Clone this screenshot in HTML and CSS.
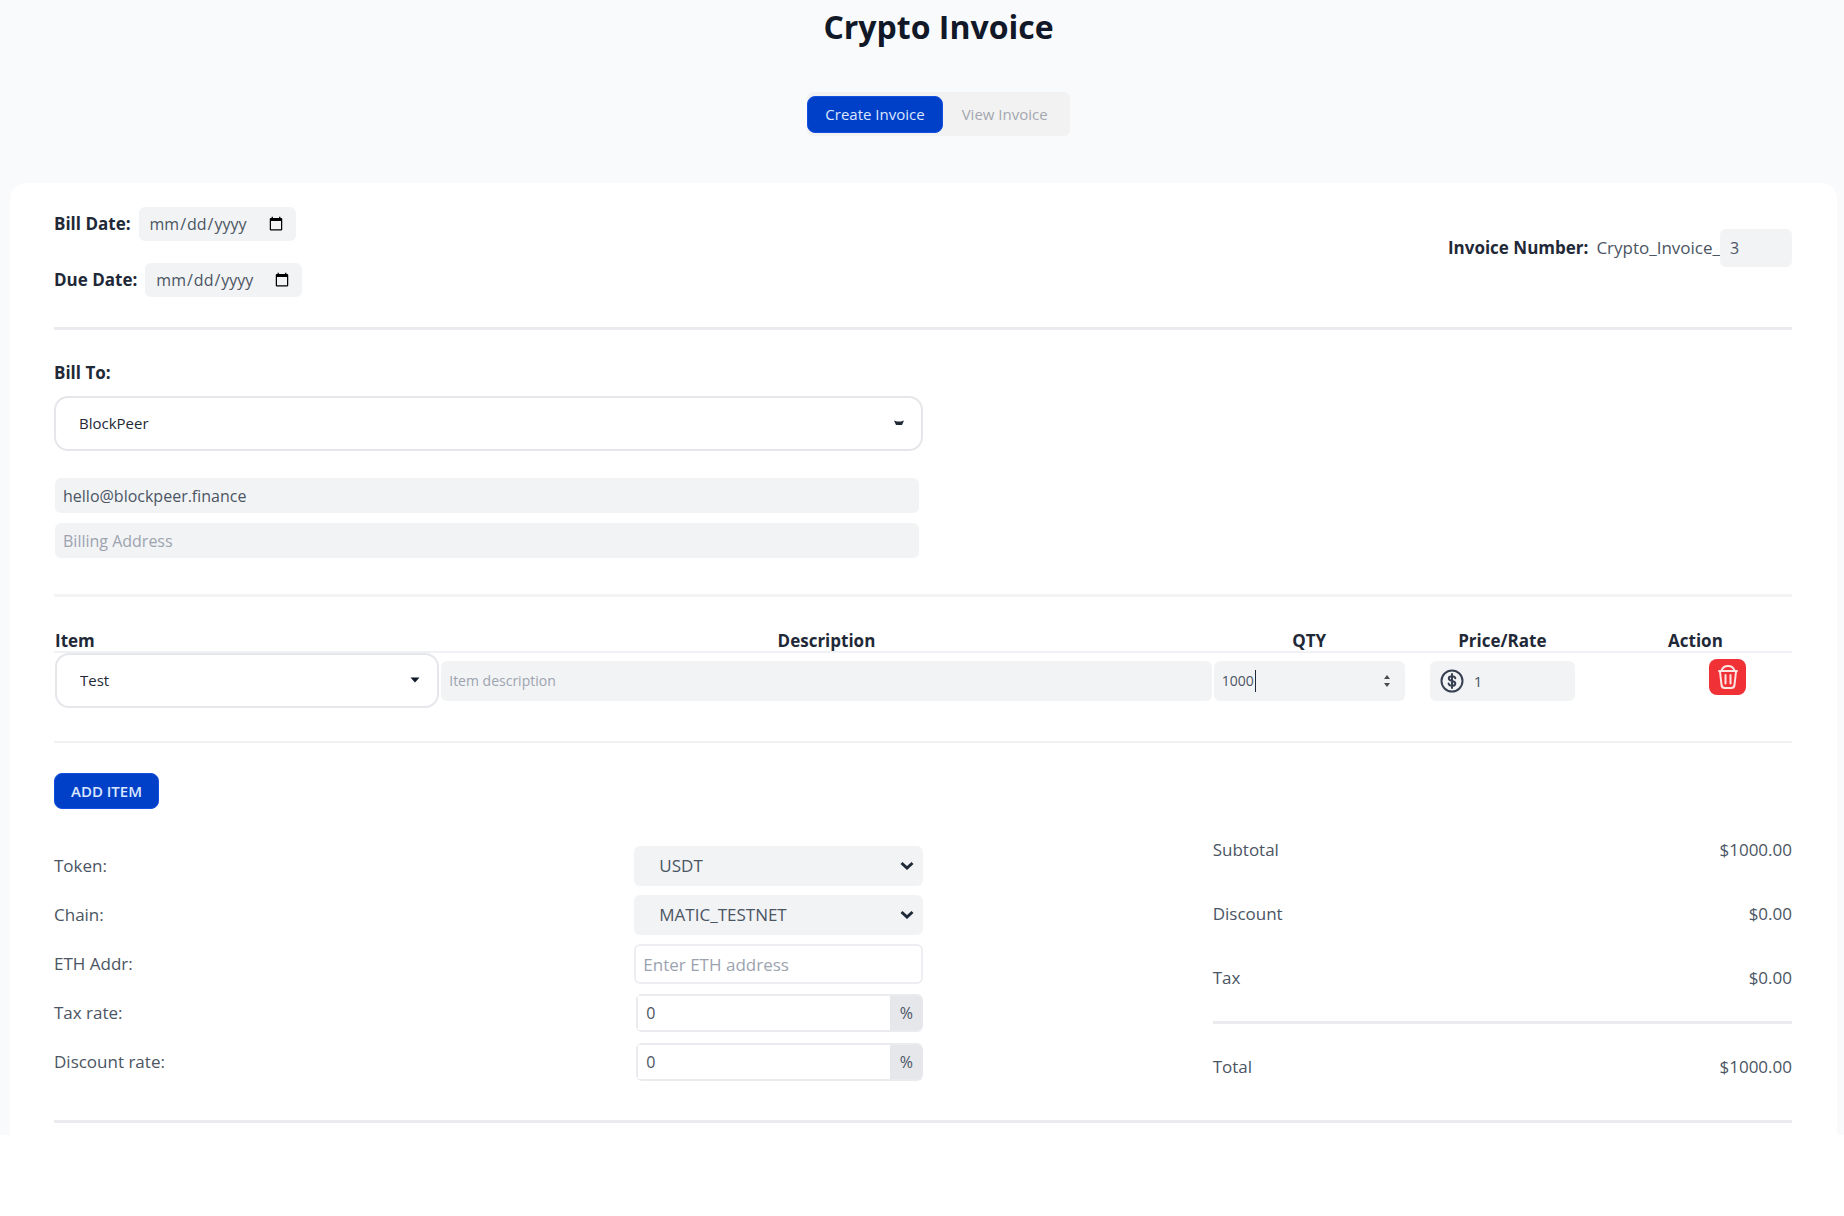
FILE: index.html
```html
<!DOCTYPE html>
<html lang="en">
<head>
<meta charset="utf-8">
<meta name="viewport" content="width=device-width, initial-scale=1">
<title>Crypto Invoice</title>
<link rel="stylesheet" href="styles.css">
</head>
<body>
<div class="page">
  <header class="page-header">
    <h1 class="title">Crypto Invoice</h1>
    <div class="tabs">
      <button type="button" class="tab tab-active">Create Invoice</button>
      <button type="button" class="tab">View Invoice</button>
    </div>
  </header>

  <main class="card">
    <section class="meta">
      <div class="dates">
        <div class="date-row">
          <label class="strong" for="bill-date">Bill Date:</label>
          <input class="field date" type="date" id="bill-date">
        </div>
        <div class="date-row">
          <label class="strong" for="due-date">Due Date:</label>
          <input class="field date" type="date" id="due-date">
        </div>
      </div>
      <div class="number-row">
        <label class="strong" for="invoice-no">Invoice Number:</label>
        <span class="prefix">Crypto_Invoice_</span>
        <input class="field invoice-no" type="text" id="invoice-no" value="3">
      </div>
    </section>

    <section class="bill-to">
      <label class="strong" for="client">Bill To:</label>
      <div class="picker">
        <select class="picker-select" id="client"><option>BlockPeer</option></select>
        <svg class="picker-arrow" width="10" height="6" viewBox="0 0 10 6"><path d="M0 0.500l3 1h4l3-1-2 4.500H2z" fill="#1f2937"/></svg>
      </div>
      <div class="contact">
        <input class="field line" type="email" aria-label="Email" value="hello@blockpeer.finance">
        <input class="field line" type="text" aria-label="Billing Address" placeholder="Billing Address">
      </div>
    </section>

    <section class="items">
      <table class="items-table">
        <thead>
          <tr>
            <th class="col-item">Item</th>
            <th class="col-desc">Description</th>
            <th>QTY</th>
            <th>Price/Rate</th>
            <th>Action</th>
          </tr>
        </thead>
        <tbody>
          <tr>
            <td>
              <div class="picker picker-item">
                <select class="picker-select" aria-label="Item"><option>Test</option></select>
                <svg class="picker-arrow" width="10" height="6" viewBox="0 0 10 6"><path d="M0.500 0.500h9L5 5.500z" fill="#111827"/></svg>
              </div>
            </td>
            <td><input class="field cell" type="text" aria-label="Description" placeholder="Item description"></td>
            <td>
              <div class="qty">
                <input class="field cell qty-input" type="number" aria-label="QTY" value="1000">
                <span class="caret"></span>
                <svg class="spinner" width="8" height="14" viewBox="0 0 8 14"><path d="M1 5l3-4 3 4zM1 9l3 4 3-4z" fill="#4b4b4b"/></svg>
              </div>
            </td>
            <td>
              <div class="field price">
                <svg width="24" height="24" viewBox="0 0 24 24" fill="none" stroke="#374151" stroke-linecap="round">
                  <circle cx="12" cy="12" r="10.5" stroke-width="2"/>
                  <path d="M15.3 9.2C15 7.900 13.700 7.200 12 7.200c-1.900 0-3.200.9-3.200 2.300 0 1.500 1.300 2 3.200 2.400s3.300 1 3.300 2.500-1.400 2.400-3.300 2.400c-1.800 0-3.100-.8-3.400-2.200M12 5v14" stroke-width="2"/>
                </svg>
                <input class="price-input" type="text" aria-label="Price/Rate" value="1">
              </div>
            </td>
            <td>
              <div class="action">
                <button type="button" class="delete" aria-label="Delete item">
                  <svg width="22" height="26" viewBox="0 0 22 26" fill="none" stroke="#ffe4e4" stroke-width="2" stroke-linecap="round" stroke-linejoin="round">
                    <path d="M2 7h18M4.500 6.500C5.500 3.500 8 2 11 2s5.500 1.500 6.500 4.500M3 7.500l1.500 13.500c.3 2 1.300 3 3.200 3h6.600c1.900 0 2.900-1 3.200-3L19 7.500M8.500 11v8.500M13.500 11v8.500"/>
                  </svg>
                </button>
              </div>
            </td>
          </tr>
        </tbody>
      </table>
    </section>

    <section class="summary">
      <button type="button" class="add">ADD ITEM</button>
      <div class="summary-cols">
        <div class="settings">
          <div class="setting">
            <label for="token">Token:</label>
            <div class="drop">
              <select class="field drop-select" id="token"><option>USDT</option></select>
              <svg class="drop-arrow" width="14" height="9" viewBox="0 0 14 9"><path d="M1.500 2L7 7l5.500-5" fill="none" stroke="#1f2937" stroke-width="3"/></svg>
            </div>
          </div>
          <div class="setting">
            <label for="chain">Chain:</label>
            <div class="drop">
              <select class="field drop-select" id="chain"><option>MATIC_TESTNET</option></select>
              <svg class="drop-arrow" width="14" height="9" viewBox="0 0 14 9"><path d="M1.500 2L7 7l5.500-5" fill="none" stroke="#1f2937" stroke-width="3"/></svg>
            </div>
          </div>
          <div class="setting">
            <label for="eth">ETH Addr:</label>
            <input class="outlined" type="text" id="eth" placeholder="Enter ETH address">
          </div>
          <div class="setting">
            <label for="tax">Tax rate:</label>
            <div class="rate">
              <input class="rate-input" type="text" id="tax" value="0">
              <span class="unit">%</span>
            </div>
          </div>
          <div class="setting">
            <label for="discount">Discount rate:</label>
            <div class="rate">
              <input class="rate-input" type="text" id="discount" value="0">
              <span class="unit">%</span>
            </div>
          </div>
        </div>
        <dl class="totals">
          <div class="total-row"><dt>Subtotal</dt><dd>$1000.00</dd></div>
          <div class="total-row"><dt>Discount</dt><dd>$0.00</dd></div>
          <div class="total-row"><dt>Tax</dt><dd>$0.00</dd></div>
          <div class="total-row grand"><dt>Total</dt><dd>$1000.00</dd></div>
        </dl>
      </div>
    </section>
  </main>
</div>
</body>
</html>
```

FILE: styles.css
```css
* {
  box-sizing: border-box;
}

body {
  margin: 0;
  background: #fff;
  color: #4b5563;
  font: 17px/24px "Open Sans", "Noto Sans", sans-serif;
}

input,
select,
button {
  margin: 0;
  padding: 0;
  border: 0;
  color: inherit;
  font: inherit;
}

input::placeholder {
  color: #9ca3af;
  opacity: 1;
}

svg {
  display: block;
}

.page {
  background: #f9fafc;
  padding: 0 7px 0 10px;
}

.page-header {
  display: flex;
  flex-direction: column;
  align-items: center;
  gap: 45px;
  padding: 7px 0 47px 30px;
}

.title {
  margin: 0;
  color: #111827;
  font-size: 32px;
  line-height: 40px;
  font-weight: 700;
}

.tabs {
  display: flex;
  align-items: center;
  height: 44px;
  border-radius: 6px;
  background: #f2f2f2;
}

.tab {
  height: 44px;
  padding: 0 22px 0 19px;
  border-radius: 8px;
  background: transparent;
  color: #a3a7af;
  font-size: 15px;
}

.tab-active {
  height: 37px;
  padding: 0 17px;
  background: #0040c8;
  border: 1px solid #1450e0;
  color: #dbe7ff;
}

.card {
  padding: 24px 45px 12px 44px;
  border-radius: 16px 16px 0 0;
  background: #fff;
}

.strong {
  color: #1f2937;
  font-weight: 700;
}

.field {
  border-radius: 6px;
  background: #f2f3f5;
}

.meta {
  display: flex;
  justify-content: space-between;
  align-items: flex-start;
  padding-bottom: 30px;
  border-bottom: 3px solid #e9ebee;
}

.dates {
  display: grid;
  gap: 22px;
}

.date-row {
  display: flex;
  align-items: center;
  gap: 8px;
}

.date {
  width: 157px;
  height: 34px;
  padding: 0 10px;
  font-size: 16px;
}

.number-row {
  display: flex;
  align-items: center;
  padding-top: 22px;
}

.prefix {
  padding-left: 8px;
}

.invoice-no {
  width: 72px;
  height: 38px;
  padding: 0 10px;
  font-size: 16px;
}

.bill-to {
  padding: 31px 0 36px;
  border-bottom: 3px solid #f4f4f6;
}

.bill-to > .strong {
  display: block;
}

.picker {
  position: relative;
  height: 55px;
}

.bill-to .picker {
  width: 50%;
  margin-top: 11px;
}

.picker-select {
  width: 100%;
  height: 100%;
  padding: 0 23px 2px;
  border: 2px solid #e5e7eb;
  border-radius: 14px;
  background: #fff;
  color: #1f2937;
  appearance: none;
  font-size: 15px;
}

.picker-arrow {
  position: absolute;
  right: 19px;
  top: 24px;
}

.contact {
  display: grid;
  gap: 10px;
  width: 50%;
  padding: 27px 4px 0 1px;
}

.line {
  width: 100%;
  height: 35px;
  padding: 0 8px;
  font-size: 16px;
}

.items {
  padding: 33px 0;
  border-bottom: 2px solid #f0f1f3;
}

.items-table {
  width: 100%;
  table-layout: fixed;
  border-collapse: collapse;
}

.items-table th {
  padding: 0;
  height: 22px;
  border-bottom: 2px solid #f0f1f4;
  color: #1f2937;
  line-height: 20px;
  font-weight: 700;
}

.items-table .col-item {
  width: 22.2222%;
  padding-left: 1px;
  text-align: left;
}

.col-desc {
  width: 44.4444%;
}

.items-table td {
  padding: 0 1px;
}

.cell {
  display: block;
  width: 100%;
  height: 40px;
  padding: 0 8px;
  font-size: 14px;
}

.qty {
  position: relative;
}

.qty-input {
  appearance: textfield;
}

.qty-input::-webkit-inner-spin-button {
  appearance: none;
}

.caret {
  position: absolute;
  left: 41px;
  top: 9px;
  width: 1px;
  height: 22px;
  background: #1f2937;
}

.spinner {
  position: absolute;
  right: 14px;
  top: 13px;
}

.price {
  display: flex;
  align-items: center;
  gap: 10px;
  width: 145px;
  height: 40px;
  margin-left: 23px;
  padding: 0 10px;
}

.price-input {
  flex: 1;
  min-width: 0;
  background: transparent;
  font-size: 15px;
}

.action {
  display: flex;
  justify-content: flex-end;
  height: 44px;
  padding-right: 45px;
}

.delete {
  display: grid;
  place-items: center;
  width: 37px;
  height: 36px;
  border-radius: 8px;
  background: #f03236;
}

.summary {
  padding: 30px 0 38px;
  border-bottom: 3px solid #e9ebee;
}

.add {
  width: 105px;
  height: 36px;
  border: 1px solid #1450e0;
  border-radius: 8px;
  background: #0040c8;
  color: #dbe7ff;
  font-size: 15px;
  font-weight: 600;
}

.summary-cols {
  display: flex;
  justify-content: space-between;
  padding-top: 29px;
}

.settings {
  display: grid;
  gap: 9px;
  width: 50%;
  padding-top: 8px;
}

.setting {
  display: grid;
  grid-template-columns: 2fr 1fr;
  column-gap: 3px;
  align-items: center;
  height: 40px;
}

.drop {
  position: relative;
}

.drop-select {
  display: block;
  width: 100%;
  height: 40px;
  padding: 0 25px;
  appearance: none;
}

.drop-arrow {
  position: absolute;
  right: 9px;
  top: 15px;
}

.outlined {
  width: 100%;
  height: 40px;
  padding: 0 7px;
  border: 2px solid #eceef1;
  border-radius: 6px;
}

.rate {
  display: flex;
  height: 38px;
  margin-left: 2px;
  border: 2px solid #e9ebee;
  border-right: 0;
  border-radius: 6px;
  font-size: 16px;
}

.rate-input {
  flex: 1;
  min-width: 0;
  padding: 0 8px;
}

.unit {
  width: 33px;
  border-radius: 0 5px 5px 0;
  line-height: 34px;
  background: #e5e7eb;
  text-align: center;
}

.totals {
  width: 33.3333%;
  margin: 0;
}

.total-row {
  display: flex;
  justify-content: space-between;
  height: 64px;
}

.total-row:nth-child(3) {
  height: 55px;
}

.total-row dd {
  margin: 0;
}

.total-row.grand {
  height: auto;
  padding-top: 31px;
  border-top: 3px solid #e9ebee;
}
```
